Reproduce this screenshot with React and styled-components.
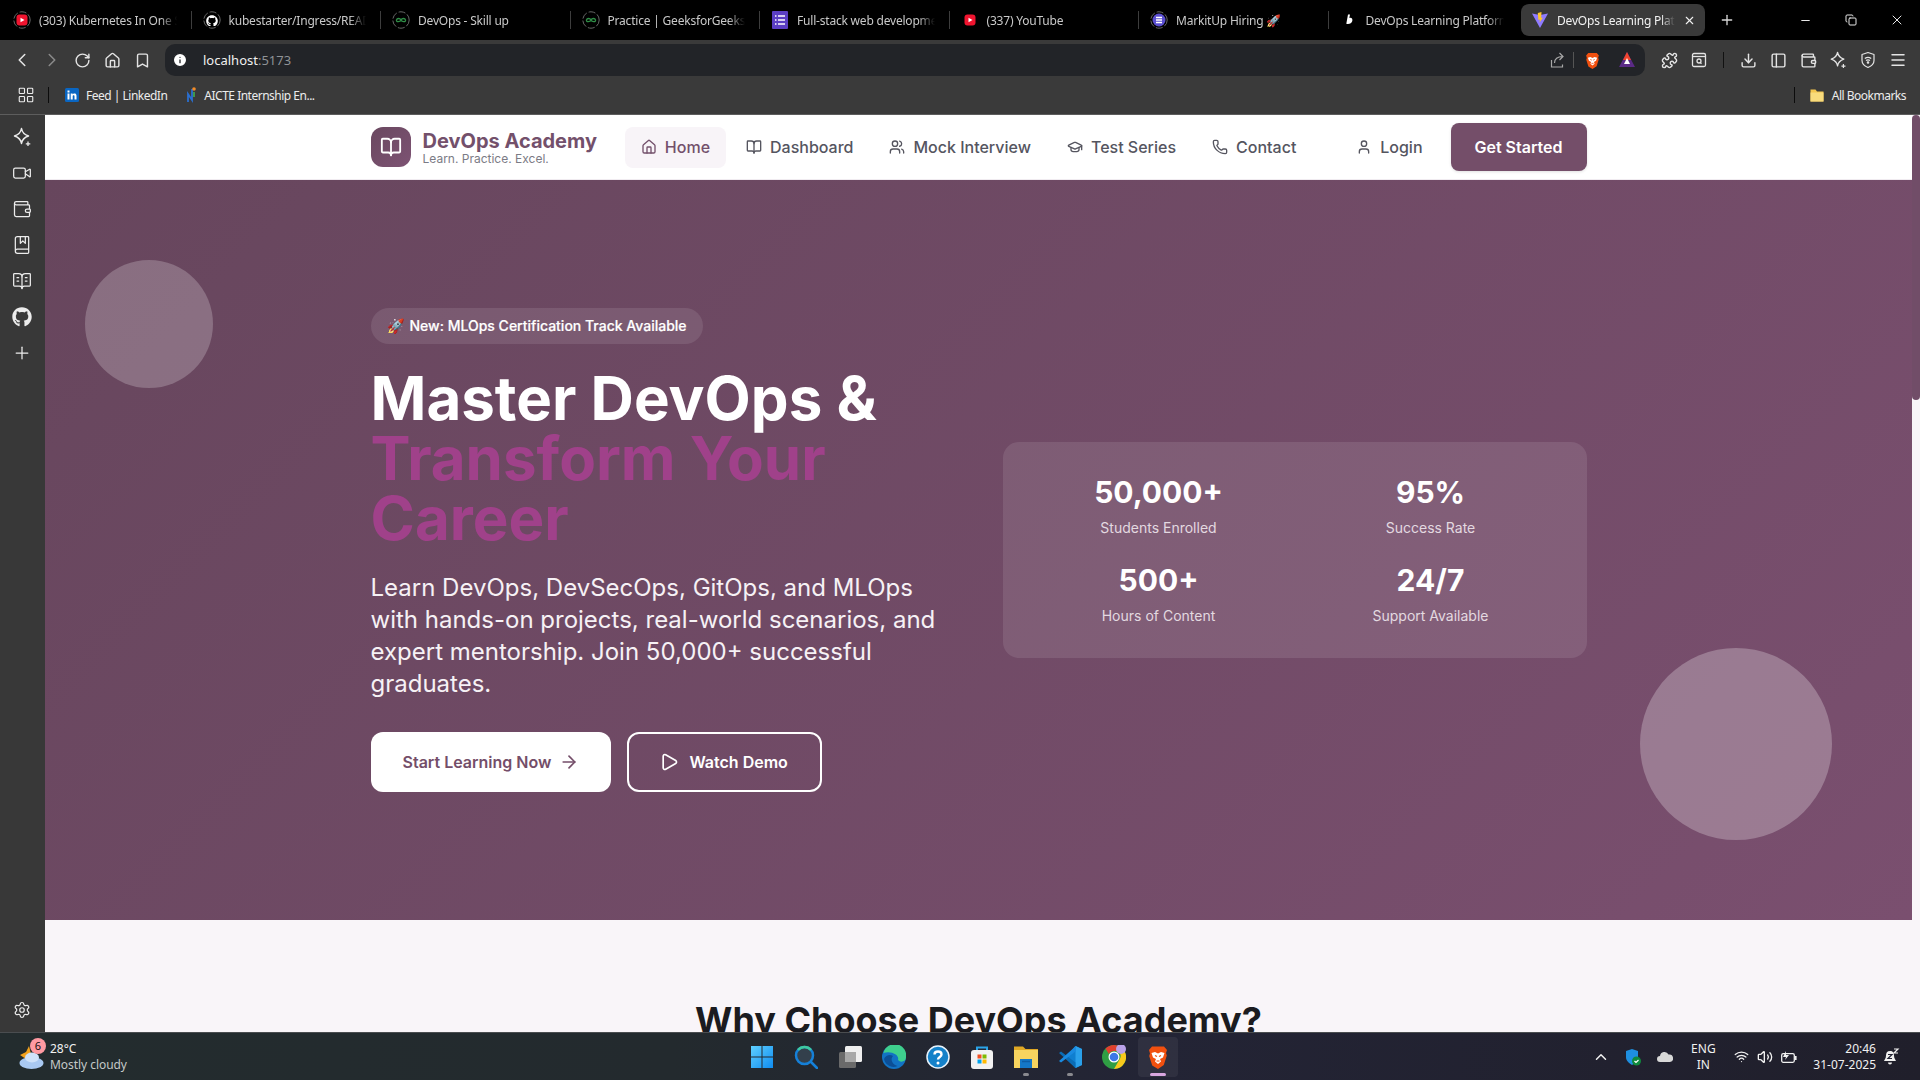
import React from 'react';
import styled, { createGlobalStyle } from 'styled-components';
import {
  ArrowRight, Bookmark, BookMarked, BookOpen, BookOpenText, ChevronLeft, ChevronRight, ChevronUp,
  Copy, Download, GraduationCap, Home, Info, LayoutGrid, Menu, Minus, PanelLeft, Phone, Play, Plus, Puzzle,
  RotateCw, Settings, User, Users, Video, Volume2, Wallet, Wifi, X,
} from 'lucide-react';
import { FaGithub } from 'react-icons/fa';

const GlobalStyle = createGlobalStyle`
  * { box-sizing: border-box; }
  html, body { margin: 0; height: 100%; overflow: hidden; }
  body { font-family: 'Inter', sans-serif; background: #000; }
`;

const Screen = styled.div`
  width: 1920px;
  height: 1080px;
  display: flex;
  flex-direction: column;
  overflow: hidden;
`;

/* browser chrome */
const TabBar = styled.div`
  height: 40px;
  flex: none;
  background: #000;
  display: flex;
  align-items: center;
  padding-left: 2px;
  font-family: 'Noto Sans', sans-serif;
  font-size: 12px;
  letter-spacing: -0.2px;
  color: #c9c9c9;
`;

const Tab = styled.div`
  flex: none;
  width: 189.5px;
  min-width: 0;
  height: 18px;
  display: flex;
  align-items: center;
  gap: 8px;
  padding: 0 14px 0 11px;
  border-right: 1px solid #3d3d3d;
  &:nth-child(8) { border-right: none; }
`;

const TabTitle = styled.span`
  white-space: nowrap;
  overflow: hidden;
  flex: 1;
  min-width: 0;
  -webkit-mask-image: linear-gradient(90deg, #000 88%, transparent);
  mask-image: linear-gradient(90deg, #000 88%, transparent);
`;

const ActiveTab = styled.div`
  flex: none;
  width: 184px;
  margin-left: 3px;
  height: 32px;
  background: #3a3a3a;
  border-radius: 8px;
  display: flex;
  align-items: center;
  gap: 8px;
  padding: 0 9px 0 10px;
  color: #f2f2f2;
`;

const TabIcon = styled.span`
  flex: none;
  width: 18px;
  height: 18px;
  display: flex;
  align-items: center;
  justify-content: center;
`;

const NewTab = styled.div`
  margin-left: 14px;
  display: flex;
  color: #d8d8d8;
`;

const WindowControls = styled.div`
  margin-left: auto;
  display: flex;
`;

const WindowButton = styled.div`
  width: 46px;
  height: 40px;
  display: flex;
  align-items: center;
  justify-content: center;
  color: #e8e8e8;
`;

const ToolBar = styled.div`
  height: 38px;
  flex: none;
  background: #3a3a3a;
  display: flex;
  align-items: center;
  padding: 2px 7px 0;
  color: #e2e2e2;
`;

const ToolButton = styled.div`
  flex: none;
  width: 30px;
  height: 30px;
  display: flex;
  align-items: center;
  justify-content: center;
  color: ${(p) => (p.$dim ? '#8a8a8a' : '#e4e4e4')};
`;

const UrlBar = styled.div`
  flex: 1;
  height: 32px;
  margin: 0 9px 0 8px;
  background: #222428;
  border-radius: 10px;
  display: flex;
  align-items: center;
  padding: 0 9px 0 7px;
  font-family: 'Noto Sans', sans-serif;
  font-size: 13px;
`;

const UrlHost = styled.span`
  margin-left: 15px;
  color: #f0f0f0;
`;

const UrlPort = styled.span`
  color: #8f9296;
`;

const UrlActions = styled.div`
  margin-left: auto;
  display: flex;
  align-items: center;
`;

const UrlAction = styled.span`
  display: flex;
  margin-left: ${(p) => p.$ml || 0}px;
`;

const Divider = styled.span`
  flex: none;
  width: 1px;
  height: ${(p) => p.$h || 18}px;
  margin: 0 ${(p) => p.$m || 0}px;
  background: ${(p) => p.$color || '#6b6b6b'};
`;

const BookmarkBar = styled.div`
  height: 37px;
  flex: none;
  background: #3a3a3a;
  border-bottom: 1px solid #5d5d5d;
  display: flex;
  align-items: center;
  padding: 0 14px 2px 17px;
  font-family: 'Noto Sans', sans-serif;
  font-size: 12px;
  color: #ececec;
`;

const BookmarkItem = styled.div`
  display: flex;
  align-items: center;
  gap: 7px;
  margin-left: ${(p) => p.$ml || 0}px;
  letter-spacing: -0.5px;
  white-space: nowrap;
`;

const BookmarksEnd = styled.div`
  margin-left: auto;
  display: flex;
  align-items: center;
`;

const Body = styled.div`
  flex: 1;
  min-height: 0;
  display: flex;
`;

const SideRail = styled.aside`
  flex: none;
  width: 45px;
  background: #383838;
  color: #ececec;
  display: flex;
  flex-direction: column;
  justify-content: space-between;
  align-items: center;
  padding: 12px 1px 13px 0;
`;

const RailGroup = styled.div`
  display: flex;
  flex-direction: column;
  gap: 16px;
  svg { display: block; }
`;

const Page = styled.main`
  flex: 1;
  min-width: 0;
  overflow: hidden;
  background: #f9f5f9;
`;

const ScrollTrack = styled.div`
  flex: none;
  width: 8px;
  background: #f9f5f9;
`;

const ScrollThumb = styled.div`
  height: 285px;
  background: #714d68;
  border-radius: 4px;
`;

/* site nav */
const Nav = styled.nav`
  height: 65px;
  background: #fff;
  border-bottom: 1px solid #f0ebf0;
`;

const Container = styled.div`
  width: 1216px;
  margin: 0 auto;
`;

const NavRow = styled(Container)`
  height: 64px;
  display: flex;
  align-items: center;
  justify-content: space-between;
`;

const Brand = styled.div`
  display: flex;
  align-items: center;
  gap: 12px;
`;

const BrandMark = styled.div`
  width: 40px;
  height: 40px;
  border-radius: 12px;
  background: linear-gradient(135deg, #6a4860, #7d5373);
  color: #fff;
  display: flex;
  align-items: center;
  justify-content: center;
`;

const BrandText = styled.div`
  display: flex;
  flex-direction: column;
`;

const BrandName = styled.span`
  font-size: 20px;
  line-height: 25px;
  font-weight: 700;
  color: #73506b;
`;

const BrandTag = styled.span`
  margin-top: -2px;
  font-size: 12px;
  line-height: 14px;
  color: #7b7b85;
`;

const NavLinks = styled.div`
  display: flex;
  gap: 4px;
`;

const NavLink = styled.a`
  display: flex;
  align-items: center;
  gap: 8px;
  height: 41px;
  padding: 0 16px;
  border-radius: 8px;
  font-size: 16px;
  font-weight: 500;
  white-space: nowrap;
  color: ${(p) => (p.$active ? '#73506b' : '#55555f')};
  background: ${(p) => (p.$active ? '#f8f4f8' : 'transparent')};
`;

const NavEnd = styled.div`
  display: flex;
  align-items: center;
  gap: 12px;
`;

const GetStarted = styled.button`
  width: 136px;
  height: 48px;
  border: none;
  border-radius: 8px;
  background: #744e69;
  color: #fff;
  font: 600 16px 'Inter', sans-serif;
  box-shadow: 0 1px 3px rgba(0, 0, 0, 0.12);
`;

/* hero */
const Hero = styled.section`
  position: relative;
  height: 740px;
  padding: 128px 0;
  overflow: hidden;
  background: linear-gradient(135deg, #67465d 0%, #7a4f6f 100%);
  color: #fff;
`;

const Blob = styled.div`
  position: absolute;
  width: ${(p) => p.$size}px;
  height: ${(p) => p.$size}px;
  border-radius: 50%;
  background: rgba(255, 255, 255, ${(p) => p.$alpha});
  ${(p) => p.$pos}
`;

const HeroGrid = styled(Container)`
  position: relative;
  display: grid;
  grid-template-columns: 1fr 1fr;
  gap: 48px;
  align-items: center;
`;

const HeroLeft = styled.div`
  display: flex;
  flex-direction: column;
  align-items: flex-start;
`;

const Badge = styled.div`
  height: 36px;
  display: flex;
  align-items: center;
  gap: 6px;
  padding: 0 16px 1px;
  border-radius: 18px;
  background: rgba(255, 255, 255, 0.1);
  font-size: 14px;
  font-weight: 500;
  -webkit-text-stroke: 0.2px #fff;
`;

const Title = styled.h1`
  margin: 24px 0 24px;
  font-size: 60px;
  line-height: 60px;
  font-weight: 700;
`;

const TitleAccent = styled.span`
  display: block;
  color: #a0418a;
`;

const Lead = styled.p`
  margin: 0 0 32px;
  font-size: 24px;
  line-height: 32px;
  color: #f6f1f5;
`;

const HeroButtons = styled.div`
  display: flex;
  gap: 16px;
`;

const HeroButton = styled.button`
  height: 60px;
  display: flex;
  align-items: center;
  gap: ${(p) => (p.$ghost ? 10 : 8)}px;
  padding: ${(p) => (p.$ghost ? '0 32px 0 30px' : '0 32px')};
  border-radius: 12px;
  border: ${(p) => (p.$ghost ? '2px solid #fff' : 'none')};
  background: ${(p) => (p.$ghost ? 'transparent' : '#fff')};
  color: ${(p) => (p.$ghost ? '#fff' : '#744e69')};
  font: 600 16px 'Inter', sans-serif;
`;

const StatsCard = styled.div`
  display: grid;
  grid-template-columns: 1fr 1fr;
  gap: 24px;
  padding: 32px;
  border-radius: 16px;
  background: rgba(255, 255, 255, 0.1);
  text-align: center;
`;

const StatValue = styled.div`
  font-size: 30px;
  line-height: 36px;
  font-weight: 700;
  margin-bottom: 8px;
`;

const StatLabel = styled.div`
  font-size: 14px;
  line-height: 20px;
  color: #e3d9e0;
`;

const Features = styled.section`
  padding-top: 80px;
  text-align: center;
`;

const FeaturesTitle = styled.h2`
  margin: 0;
  font-size: 36px;
  line-height: 40px;
  font-weight: 700;
  color: #1b1b20;
`;

/* windows taskbar */
const TaskBar = styled.footer`
  height: 48px;
  flex: none;
  display: grid;
  grid-template-columns: 1fr auto 1fr;
  align-items: center;
  background: linear-gradient(90deg, #232c2e 0%, #232a2e 35%, #232435 60%, #201f2b 100%);
  border-top: 1px solid #4a4d50;
  font-family: 'Noto Sans', sans-serif;
  font-size: 12px;
  color: #f1f1f1;
`;

const Weather = styled.div`
  position: relative;
  display: flex;
  align-items: center;
  gap: 6px;
  padding-left: 18px;
`;

const WeatherBadge = styled.span`
  position: absolute;
  left: 30px;
  top: -3px;
  width: 16px;
  height: 16px;
  border-radius: 50%;
  background: #ff9aa2;
  color: #111;
  font-size: 11px;
  line-height: 16px;
  text-align: center;
`;

const StackedText = styled.div`
  display: flex;
  flex-direction: column;
  line-height: 16px;
  letter-spacing: -0.05px;
`;

const Muted = styled.span`
  color: #c4c8c8;
`;

const TaskIcons = styled.div`
  display: flex;
  gap: 4px;
`;

const TaskIcon = styled.div`
  position: relative;
  width: 40px;
  height: 40px;
  display: flex;
  align-items: center;
  justify-content: center;
  border-radius: 4px;
  background: ${(p) => (p.$active ? 'rgba(255, 255, 255, 0.06)' : 'transparent')};
`;

const RunDot = styled.span`
  position: absolute;
  left: 50%;
  bottom: 1px;
  transform: translateX(-50%);
  width: ${(p) => (p.$active ? 16 : 6)}px;
  height: 3px;
  border-radius: 2px;
  background: ${(p) => (p.$active ? '#d8a6e0' : '#8a8a8f')};
`;

const Tray = styled.div`
  justify-self: end;
  display: flex;
  align-items: center;
  padding-right: 20px;
`;

const TrayIcon = styled.span`
  display: flex;
  justify-content: center;
  width: ${(p) => p.$w || 32}px;
  margin-right: ${(p) => p.$mr || 0}px;
`;

const Lang = styled.div`
  width: 40px;
  margin: 0 6px 0 0;
  line-height: 16px;
  text-align: center;
`;

const Clock = styled.div`
  margin: 0 6px 0 12px;
  line-height: 16px;
  text-align: right;
`;

/* drawn icons: lucide has no match for these */
const AddStarIcon = ({ size = 20, strokeWidth = 1.5 }) => (
  <svg width={size} height={size} viewBox="0 0 20 20" fill="none" stroke="currentColor" strokeWidth={strokeWidth}>
    <path d="M9.500 1.500c.6 3.700 3 6.200 7 7.500-4 1.300-6.400 3.800-7 7.500-.6-3.700-3-6.200-7-7.500 4-1.300 6.400-3.800 7-7.500z" strokeLinejoin="round" />
    <path d="M16 14.500v4.500M13.800 16.800h4.500" strokeWidth="1.300" />
  </svg>
);

const ShareIcon = () => (
  <svg width="18" height="18" viewBox="0 0 18 18" fill="none" stroke="#a8a8a8" strokeWidth="1.200">
    <path d="M2.500 9v7h11v-2.500" />
    <path d="M5.500 12c0-4 3-6.500 8-6.500M10.500 2l3.500 3.500L10.500 9" />
  </svg>
);

const SearchBoxIcon = () => (
  <svg width="18" height="18" viewBox="0 0 18 18" fill="none" stroke="#e4e4e4" strokeWidth="1.300">
    <rect x="2.500" y="2.500" width="13" height="13" rx="1.500" />
    <path d="M2.500 5.500h13" />
    <circle cx="9" cy="10" r="2" />
    <path d="M10.300 11.500l1.200 1.200" />
  </svg>
);

const VpnIcon = () => (
  <svg width="18" height="18" viewBox="0 0 18 18" fill="none" stroke="#e4e4e4" strokeWidth="1.200">
    <path d="M9 1.500l6 2v6c0 3.500-2.500 5.500-6 7-3.500-1.500-6-3.500-6-7v-6z" strokeLinejoin="round" />
    <path d="M5.800 7.500c2-1.500 4.400-1.500 6.400 0M7 9.500c1.300-.9 2.700-.9 4 0" />
    <circle cx="9" cy="11.500" r=".7" fill="#e4e4e4" />
  </svg>
);

const SleepBell = () => (
  <svg width="18" height="18" viewBox="0 0 18 18">
    <path d="M8 3c-3 0-4 2-4 4.500 0 3-1.500 4-2 5.500h12c-.5-1.500-2-2.500-2-5.500C12 5 11 3 8 3z" fill="#f1f1f1" />
    <path d="M6 14.500h4a2 2 0 0 1-4 0z" fill="#f1f1f1" />
    <path d="M12 1h4l-4 4h4" fill="none" stroke="#f1f1f1" strokeWidth="1.200" />
    <path d="M6 6.500h4l-4 4h4" fill="none" stroke="#232435" strokeWidth="1.200" />
  </svg>
);

/* favicons and other small logos */
const Ring = () => <circle cx="9" cy="9" r="8.2" fill="none" stroke="#666" strokeWidth="1" strokeDasharray="7 2" />;

const YouTubeIcon = ({ ring }) => (
  <svg width="18" height="18" viewBox="0 0 18 18">
    {ring && <Ring />}
    <rect x="3.500" y="3.500" width="11" height="11" rx="3" fill="#f0142f" />
    <path d="M7.500 6.800 11.500 9l-4 2.200z" fill="#fff" />
  </svg>
);

const GithubFavicon = () => (
  <svg width="18" height="18" viewBox="0 0 18 18">
    <Ring />
    <foreignObject x="3" y="3" width="12" height="12"><FaGithub size={12} color="#fff" /></foreignObject>
  </svg>
);

const GfgIcon = () => (
  <svg width="18" height="18" viewBox="0 0 18 18">
    <Ring />
    <path d="M9 9c-1-2-4-2-4.500 0s3 2.500 4.500 0c1.500 2.500 5 2 4.500 0S10 7 9 9z" fill="none" stroke="#2f8d46" strokeWidth="1.300" />
  </svg>
);

const FormIcon = () => (
  <svg width="16" height="18" viewBox="0 0 16 18">
    <rect width="16" height="18" rx="1" fill="#5b3fc4" />
    <path d="M3 5h1.500M6 5h7M3 9h1.500M6 9h7M3 13h1.500M6 13h7" stroke="#fff" strokeWidth="1.500" />
  </svg>
);

const MarkitIcon = () => (
  <svg width="18" height="18" viewBox="0 0 18 18">
    <Ring />
    <circle cx="9" cy="9" r="6.500" fill="#5b4fd0" />
    <path d="M6 6.500h6M6 9h6M6 11.500h6" stroke="#fff" strokeWidth="1.300" />
  </svg>
);

const BoltIcon = () => (
  <svg width="18" height="18" viewBox="0 0 18 18">
    <path d="M8 3.500h2L9.300 7c2.500-.6 3.500 1 3 3-.6 2.500-3.300 3.500-6 2.800z" fill="#fff" />
  </svg>
);

const ViteIcon = () => (
  <svg width="18" height="18" viewBox="0 0 18 18">
    <path d="M1 2.500 9 4l8-1.500L9 17z" fill="#8f7bff" />
    <path d="M10.500 1 6.800 2l.6 7 1.500-.4-.3 3L12 6.500l-1.800.4z" fill="#ffc629" />
  </svg>
);

const LinkedInIcon = () => (
  <svg width="14" height="14" viewBox="0 0 14 14">
    <rect width="14" height="14" rx="1.500" fill="#0a66c2" />
    <path d="M2.500 5.500h2v6h-2zM2.500 2.500h2v2h-2zM5.700 5.500h1.900v.9c.8-1.400 3.900-1.600 3.900 1.200v3.900h-2V8.200c0-1.400-1.800-1.300-1.800 0v3.300h-2z" fill="#fff" />
  </svg>
);

const AicteIcon = () => (
  <svg width="10" height="18" viewBox="0 0 10 18">
    <path d="M1 16V8l4 6V3" fill="none" stroke="#2a6fd0" strokeWidth="1.800" />
    <circle cx="7" cy="3" r="1.800" fill="#f28c28" />
    <path d="M7 6v5" stroke="#3fa34d" strokeWidth="1.800" />
  </svg>
);

const BraveLogo = ({ size = 18 }) => (
  <svg width={size} height={size} viewBox="0 0 24 24">
    <path d="M6 1.500h12l3 3.500-1 3 .8 2.500-3 9.500L12 24l-5.800-3.500-3-9.500L4 8.500 3 5z" fill="#f1500f" />
    <path d="M5.500 8 9 7l3 1.500L15 7l3.500 1-1.500 4.500-3 1.500 1 2.500L12 19l-3-2.500 1-2.500-3-1.500z" fill="#fff" />
    <path d="M9 10.500l2 1M15 10.500l-2 1M10.500 16h3" stroke="#f1500f" strokeWidth="1.200" />
  </svg>
);

const AuroraIcon = () => (
  <svg width="18" height="18" viewBox="0 0 18 18">
    <path d="M9 1 17 16H1z" fill="#5a2a86" />
    <path d="M9 1 13 9H5z" fill="#f0442c" />
    <path d="M9 7l3 6H6z" fill="#fff" />
  </svg>
);

const FolderIcon = ({ size = 16 }) => (
  <svg width={size} height={size} viewBox="0 0 16 16">
    <path d="M1.500 2.500h5l1.500 2h6.500v10h-13z" fill="#f3c64f" />
    <path d="M1.500 5.500h13v9h-13z" fill="#f8db7c" />
  </svg>
);

const WeatherIcon = () => (
  <svg width="26" height="26" viewBox="0 0 26 26">
    <path d="M2 11l6-3 3-6 2 8-5 5z" fill="#f2a21d" />
    <ellipse cx="13.500" cy="19" rx="12" ry="6" fill="#a9c9f2" />
    <ellipse cx="14" cy="13.500" rx="7" ry="5" fill="#cfe2fa" />
  </svg>
);

const WinIcon = () => (
  <svg width="24" height="24" viewBox="0 0 24 24">
    <defs>
      <linearGradient id="winFill" x1="0" y1="0" x2="1" y2="1">
        <stop offset="0" stopColor="#5fd0ff" />
        <stop offset="1" stopColor="#0f8cf0" />
      </linearGradient>
    </defs>
    <path d="M1 1h10.500v10.500H1zM12.500 1H23v10.500H12.500zM1 12.500h10.500V23H1zM12.500 12.500H23V23H12.500z" fill="url(#winFill)" />
  </svg>
);

const SearchIcon = () => (
  <svg width="24" height="24" viewBox="0 0 24 24">
    <circle cx="10.500" cy="10.500" r="8.500" fill="#33404c" stroke="#1580d8" strokeWidth="2.500" />
    <path d="M4 5A8.500 8.500 0 0 1 17 5" fill="none" stroke="#3fc9a0" strokeWidth="2.500" />
    <path d="M17 17l6 6" stroke="#1580d8" strokeWidth="2.500" strokeLinecap="round" />
  </svg>
);

const TaskViewIcon = () => (
  <svg width="24" height="24" viewBox="0 0 24 24">
    <rect x="1" y="7" width="17" height="16" rx="1.500" fill="#6a6a6a" />
    <rect x="7" y="1" width="17" height="16" rx="1.500" fill="#efefef" />
    <rect x="7" y="7" width="11" height="10" fill="#a8a8a8" />
  </svg>
);

const EdgeIcon = () => (
  <svg width="24" height="24" viewBox="0 0 24 24">
    <circle cx="12" cy="12" r="12" fill="#1273c4" />
    <path d="M1.500 8A11 11 0 0 1 23.900 13c.1 4-6.900 5-7.900 1.500 1.500-4-6-9-14.500-6.500z" fill="#3ecf8e" />
    <path d="M11 11c-3 3-1 8.500 4.500 10-6 3-12.500-1.500-13.500-7 1.500-4 6.500-5 9-3z" fill="#0c4f96" />
  </svg>
);

const HelpIcon = () => (
  <svg width="24" height="24" viewBox="0 0 24 24">
    <circle cx="12" cy="12" r="11" fill="#1481c9" stroke="#e8f3fb" strokeWidth="1.500" />
    <path d="M8.500 9.500C8.500 5.500 15.500 5.500 15.500 9.500c0 2.500-3.500 2.500-3.500 5" fill="none" stroke="#fff" strokeWidth="2.400" />
    <circle cx="12" cy="18" r="1.500" fill="#fff" />
  </svg>
);

const StoreIcon = () => (
  <svg width="24" height="24" viewBox="0 0 24 24">
    <path d="M7 6V2.500h10V6" fill="none" stroke="#2aa3e8" strokeWidth="2" />
    <rect x="1" y="5" width="22" height="19" rx="3" fill="#f2f2f2" />
    <path d="M7.500 9.500h4v4h-4z" fill="#f25022" />
    <path d="M12.500 9.500h4v4h-4z" fill="#7fba00" />
    <path d="M7.500 14.500h4v4h-4z" fill="#00a4ef" />
    <path d="M12.500 14.500h4v4h-4z" fill="#ffb900" />
  </svg>
);

const ExplorerIcon = () => (
  <svg width="24" height="24" viewBox="0 0 24 24">
    <path d="M0 1.500h9l2.500 2.500H24v19H0z" fill="#e0a825" />
    <path d="M0 5h24v18H0z" fill="#f7d45f" />
    <path d="M6 14h12v9H6z" fill="#1478c8" />
    <path d="M8 16.500h8" stroke="#0d5ea6" strokeWidth="1.500" />
  </svg>
);

const VscodeIcon = () => (
  <svg width="24" height="24" viewBox="0 0 24 24">
    <path d="M17.500 1 24 4v16l-6.500 3L7 13z" fill="#0f7fd0" />
    <path d="M17.500 1v22l6.500-3V4z" fill="#2aa0ea" />
    <path d="M1 8l2-1.500L17.500 17.500V23L14 19.500z" fill="#0a6cb5" />
    <path d="M1 16l2 1.500L17.500 6.500V1L14 4.500z" fill="#1a8ae0" />
  </svg>
);

const ChromeIcon = () => (
  <svg width="24" height="24" viewBox="0 0 24 24">
    <circle cx="12" cy="12" r="12" fill="#2f9e44" />
    <path d="M12 0a12 12 0 0 1 10.400 6H12a6 6 0 0 0-5.200 3L3.500 3.500A12 12 0 0 1 12 0z" fill="#e0402f" />
    <path d="M22.400 6A12 12 0 0 1 12 24l5.200-9A6 6 0 0 0 16 6z" fill="#f8c91c" />
    <circle cx="12" cy="12" r="5.500" fill="#fff" />
    <circle cx="12" cy="12" r="4.300" fill="#3b78e7" />
    <circle cx="19" cy="4" r="5" fill="#b9a1e8" />
  </svg>
);

const DefenderIcon = () => (
  <svg width="16" height="18" viewBox="0 0 16 18">
    <path d="M7 1l6 2v6c0 4-3 6-6 8-3-2-6-4-6-8V3z" fill="#1e8fe0" />
    <circle cx="11.500" cy="13" r="4.500" fill="#0f8a3c" />
    <path d="M9.500 13l1.500 1.500 2.500-2.500" fill="none" stroke="#fff" strokeWidth="1.200" />
  </svg>
);

const CloudIcon = () => (
  <svg width="16" height="11" viewBox="0 0 16 11">
    <path d="M3 11a3 3 0 0 1 0-6 4.500 4.500 0 0 1 8.500-1.500A3.800 3.800 0 0 1 13 11z" fill="#d8d8d8" />
  </svg>
);

const BatteryIcon = () => (
  <svg width="16" height="14" viewBox="0 0 16 14">
    <rect x="0.700" y="3.700" width="12.600" height="8.600" rx="1.500" fill="none" stroke="#f1f1f1" strokeWidth="1.300" />
    <rect x="14" y="6" width="1.600" height="4" fill="#f1f1f1" />
    <path d="M5 1 2 7h3l-1 3 4-5H5z" fill="#f1f1f1" />
  </svg>
);

const tabs = [
  { icon: <YouTubeIcon ring />, title: '(303) Kubernetes In One Shot' },
  { icon: <GithubFavicon />, title: 'kubestarter/Ingress/README.md' },
  { icon: <GfgIcon />, title: 'DevOps - Skill up' },
  { icon: <GfgIcon />, title: 'Practice | GeeksforGeeks | A' },
  { icon: <FormIcon />, title: 'Full-stack web development' },
  { icon: <YouTubeIcon />, title: '(337) YouTube' },
  { icon: <MarkitIcon />, title: 'MarkitUp Hiring 🚀' },
  { icon: <BoltIcon />, title: 'DevOps Learning Platform' },
];

const navLinks = [
  { icon: Home, label: 'Home', active: true },
  { icon: BookOpen, label: 'Dashboard' },
  { icon: Users, label: 'Mock Interview' },
  { icon: GraduationCap, label: 'Test Series' },
  { icon: Phone, label: 'Contact' },
];

const stats = [
  { value: '50,000+', label: 'Students Enrolled' },
  { value: '95%', label: 'Success Rate' },
  { value: '500+', label: 'Hours of Content' },
  { value: '24/7', label: 'Support Available' },
];

const taskIcons = [
  { icon: <WinIcon /> },
  { icon: <SearchIcon /> },
  { icon: <TaskViewIcon /> },
  { icon: <EdgeIcon /> },
  { icon: <HelpIcon /> },
  { icon: <StoreIcon /> },
  { icon: <ExplorerIcon />, running: true },
  { icon: <VscodeIcon />, running: true },
  { icon: <ChromeIcon /> },
  { icon: <BraveLogo size={24} />, active: true },
];

const railIcons = [AddStarIcon, Video, Wallet, BookMarked, BookOpenText, FaGithub, Plus];

const App = () => {
  return (
    <Screen>
      <GlobalStyle />
      <TabBar>
        {tabs.map((tab) => (
          <Tab key={tab.title}>
            <TabIcon>{tab.icon}</TabIcon>
            <TabTitle>{tab.title}</TabTitle>
          </Tab>
        ))}
        <ActiveTab>
          <TabIcon><ViteIcon /></TabIcon>
          <TabTitle>DevOps Learning Platform</TabTitle>
          <X size={13} />
        </ActiveTab>
        <NewTab><Plus size={16} /></NewTab>
        <WindowControls>
          <WindowButton><Minus size={13} /></WindowButton>
          <WindowButton><Copy size={12} /></WindowButton>
          <WindowButton><X size={16} strokeWidth={1.5} /></WindowButton>
        </WindowControls>
      </TabBar>

      <ToolBar>
        <ToolButton><ChevronLeft size={22} strokeWidth={1.7} /></ToolButton>
        <ToolButton $dim><ChevronRight size={22} strokeWidth={1.7} /></ToolButton>
        <ToolButton><RotateCw size={17} /></ToolButton>
        <ToolButton><Home size={17} /></ToolButton>
        <ToolButton><Bookmark size={17} /></ToolButton>
        <UrlBar>
          <Info size={16} fill="#fff" color="#222428" />
          <UrlHost>localhost<UrlPort>:5173</UrlPort></UrlHost>
          <UrlActions>
            <ShareIcon />
            <Divider $h={16} $m={6} $color="#555" />
            <UrlAction $ml={4}><BraveLogo size={17} /></UrlAction>
            <UrlAction $ml={17}><AuroraIcon /></UrlAction>
          </UrlActions>
        </UrlBar>
        <ToolButton><Puzzle size={17} /></ToolButton>
        <ToolButton><SearchBoxIcon /></ToolButton>
        <Divider $h={16} $m={9} $color="#111" />
        <ToolButton><Download size={17} /></ToolButton>
        <ToolButton><PanelLeft size={17} /></ToolButton>
        <ToolButton><Wallet size={17} /></ToolButton>
        <ToolButton><AddStarIcon size={18} /></ToolButton>
        <ToolButton><VpnIcon /></ToolButton>
        <ToolButton><Menu size={18} /></ToolButton>
      </ToolBar>

      <BookmarkBar>
        <LayoutGrid size={18} strokeWidth={1.5} />
        <Divider $h={16} $m={13} $color="#0c0c0c" />
        <BookmarkItem $ml={3}><LinkedInIcon />Feed | LinkedIn</BookmarkItem>
        <BookmarkItem $ml={20}><AicteIcon />AICTE Internship En...</BookmarkItem>
        <BookmarksEnd>
          <Divider $h={16} $m={14} $color="#0c0c0c" />
          <BookmarkItem><FolderIcon />All Bookmarks</BookmarkItem>
        </BookmarksEnd>
      </BookmarkBar>

      <Body>
        <SideRail>
          <RailGroup>
            {railIcons.map((Icon, i) => <Icon key={i} size={20} strokeWidth={1.5} />)}
          </RailGroup>
          <Settings size={18} strokeWidth={1.6} />
        </SideRail>

        <Page>
          <Nav>
            <NavRow>
              <Brand>
                <BrandMark><BookOpen size={22} strokeWidth={2} /></BrandMark>
                <BrandText>
                  <BrandName>DevOps Academy</BrandName>
                  <BrandTag>Learn. Practice. Excel.</BrandTag>
                </BrandText>
              </Brand>
              <NavLinks>
                {navLinks.map(({ icon: Icon, label, active }) => (
                  <NavLink key={label} $active={active}>
                    <Icon size={16} />
                    {label}
                  </NavLink>
                ))}
              </NavLinks>
              <NavEnd>
                <NavLink><User size={16} />Login</NavLink>
                <GetStarted>Get Started</GetStarted>
              </NavEnd>
            </NavRow>
          </Nav>

          <Hero>
            <Blob $size={128} $alpha={0.22} $pos="left: 40px; top: 80px;" />
            <Blob $size={192} $alpha={0.26} $pos="right: 80px; bottom: 80px;" />
            <HeroGrid>
              <HeroLeft>
                <Badge>
                  <span role="img" aria-label="rocket">🚀</span>
                  New: MLOps Certification Track Available
                </Badge>
                <Title>
                  Master DevOps &amp;
                  <TitleAccent>Transform Your Career</TitleAccent>
                </Title>
                <Lead>
                  Learn DevOps, DevSecOps, GitOps, and MLOps with hands-on projects, real-world scenarios, and expert mentorship. Join 50,000+ successful graduates.
                </Lead>
                <HeroButtons>
                  <HeroButton>Start Learning Now<ArrowRight size={20} /></HeroButton>
                  <HeroButton $ghost><Play size={20} />Watch Demo</HeroButton>
                </HeroButtons>
              </HeroLeft>
              <StatsCard>
                {stats.map((stat) => (
                  <div key={stat.label}>
                    <StatValue>{stat.value}</StatValue>
                    <StatLabel>{stat.label}</StatLabel>
                  </div>
                ))}
              </StatsCard>
            </HeroGrid>
          </Hero>

          <Features>
            <FeaturesTitle>Why Choose DevOps Academy?</FeaturesTitle>
          </Features>
        </Page>

        <ScrollTrack><ScrollThumb /></ScrollTrack>
      </Body>

      <TaskBar>
        <Weather>
          <WeatherIcon />
          <WeatherBadge>6</WeatherBadge>
          <StackedText>
            <span>28°C</span>
            <Muted>Mostly cloudy</Muted>
          </StackedText>
        </Weather>
        <TaskIcons>
          {taskIcons.map((item, i) => (
            <TaskIcon key={i} $active={item.active}>
              {item.icon}
              {(item.running || item.active) && <RunDot $active={item.active} />}
            </TaskIcon>
          ))}
        </TaskIcons>
        <Tray>
          <TrayIcon><ChevronUp size={18} /></TrayIcon>
          <TrayIcon><DefenderIcon /></TrayIcon>
          <TrayIcon $mr={2}><CloudIcon /></TrayIcon>
          <Lang>ENG<br />IN</Lang>
          <TrayIcon $w={24}><Wifi size={15} /></TrayIcon>
          <TrayIcon $w={24}><Volume2 size={16} /></TrayIcon>
          <TrayIcon $w={24}><BatteryIcon /></TrayIcon>
          <Clock>20:46<br />31-07-2025</Clock>
          <SleepBell />
        </Tray>
      </TaskBar>
    </Screen>
  );
};

export default App;
